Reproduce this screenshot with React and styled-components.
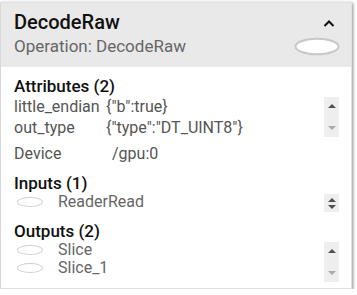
import styled, { createGlobalStyle } from "styled-components";

const GlobalStyle = createGlobalStyle`
    body {
        margin: 0;
        background: #fff;
        font-family: Roboto, "Noto Sans", sans-serif;
    }
`

const attributes = [
    { key: "little_endian", value: '{"b":true}' },
    { key: "out_type", value: '{"type":"DT_UINT8"}' },
];

const App = () => {
    return (
        <>
            <GlobalStyle />
            <Card>
                <Header>
                    <TitleWrap>
                        <Title>DecodeRaw</Title>
                        <Subtitle>Operation: DecodeRaw</Subtitle>
                    </TitleWrap>
                    <HeaderSide>
                        <Chevron width="12" height="8" viewBox="0 0 12 8">
                            <path d="M1.5 7 L6 2.5 L10.5 7" fill="none" stroke="#111" strokeWidth="2" />
                        </Chevron>
                        <Oval width="46" height="19" viewBox="0 0 46 19">
                            <ellipse cx="23" cy="9.5" rx="21.5" ry="7.8" fill="#fff" stroke="#c8c8c8" strokeWidth="2" />
                        </Oval>
                    </HeaderSide>
                </Header>
                <Body>
                    <SectionTitle>Attributes (2)</SectionTitle>
                    <ListRow>
                        <AttrTable>
                            {attributes.map((a) => (
                                <AttrRow key={a.key}>
                                    <AttrKey>{a.key}</AttrKey>
                                    <AttrValue>{a.value}</AttrValue>
                                </AttrRow>
                            ))}
                        </AttrTable>
                        <ScrollBar $height={40} $top={1}>
                            <Arrow $up />
                            <Arrow $disabled />
                        </ScrollBar>
                    </ListRow>
                    <DeviceRow>
                        <AttrKey>Device</AttrKey>
                        <DeviceValue>/gpu:0</DeviceValue>
                    </DeviceRow>
                    <SectionTitle $top={9}>Inputs (1)</SectionTitle>
                    <ListRow>
                        <NodeList>
                            <NodeRow><NodeOval /><NodeName>ReaderRead</NodeName></NodeRow>
                        </NodeList>
                        <ScrollBar $height={18} $top={1} $tight>
                            <Arrow $up />
                            <Arrow />
                        </ScrollBar>
                    </ListRow>
                    <SectionTitle $top={9}>Outputs (2)</SectionTitle>
                    <ListRow>
                        <NodeList>
                            <NodeRow><NodeOval /><NodeName>Slice</NodeName></NodeRow>
                            <NodeRow><NodeOval /><NodeName>Slice_1</NodeName></NodeRow>
                        </NodeList>
                        <ScrollBar $height={40} $top={1}>
                            <Arrow $up />
                            <Arrow $disabled />
                        </ScrollBar>
                    </ListRow>
                </Body>
            </Card>
        </>
    )
}

export default App

const Card = styled.div`
    margin-top: 2px;
    width: 352px;
    box-sizing: border-box;
    border: 1px solid #e0e0e0;
    border-left-color: #d8d8d8;
    background: #fff;
    box-shadow: 1px 1px 3px rgba(0, 0, 0, 0.45);
`
const Header = styled.div`
    background: #e9e9e9;
    height: 64px;
    box-sizing: border-box;
    padding: 7px 11px 0 13px;
    display: flex;
    justify-content: space-between;
`
const TitleWrap = styled.div`
    display: flex;
    flex-direction: column;
`
const Title = styled.div`
    font-size: 20px;
    font-weight: 500;
    line-height: 24px;
    color: #111;
`
const Subtitle = styled.div`
    font-size: 17px;
    line-height: 20px;
    margin-top: 2px;
    color: #666;
`
const HeaderSide = styled.div`
    display: flex;
    flex-direction: column;
    align-items: flex-end;
    padding-top: 9px;
    gap: 10px;
`
const Chevron = styled.svg`
    display: block;
    margin-right: 5px;
`
const Oval = styled.svg`
    display: block;
`
const Body = styled.div`
    padding: 9px 12px 6px 13px;
    display: flex;
    flex-direction: column;
`
const SectionTitle = styled.div`
    font-size: 17px;
    font-weight: 500;
    line-height: 20px;
    color: #111;
    margin-top: ${(p) => p.$top || 0}px;
`
const ListRow = styled.div`
    display: flex;
    justify-content: space-between;
    align-items: flex-start;
`
const AttrTable = styled.div`
    display: flex;
    flex-direction: column;
`
const AttrRow = styled.div`
    display: flex;
    font-size: 16px;
    line-height: 21px;
    color: #555;
`
const AttrKey = styled.div`
    width: 92px;
    color: #555;
`
const AttrValue = styled.div`
    color: #555;
`
const DeviceRow = styled.div`
    display: flex;
    font-size: 16px;
    line-height: 21px;
    margin-top: 5px;
    color: #555;
`
const DeviceValue = styled.div`
    padding-left: 6px;
`
const ScrollBar = styled.div`
    width: 15px;
    height: ${(p) => p.$height}px;
    margin-top: ${(p) => p.$top}px;
    background: #eee;
    display: flex;
    flex-direction: column;
    justify-content: ${(p) => (p.$tight ? "center" : "space-between")};
    align-items: center;
    padding: 7px 0;
    box-sizing: border-box;
    gap: 3px;
`
const Arrow = styled.div`
    width: 0;
    height: 0;
    border-left: 4px solid transparent;
    border-right: 4px solid transparent;
    ${(p) => (p.$up ? "border-bottom" : "border-top")}: 4px solid ${(p) => (p.$disabled ? "#aaa" : "#505050")};
`
const NodeList = styled.div`
    display: flex;
    flex-direction: column;
`
const NodeRow = styled.div`
    display: flex;
    align-items: center;
    font-size: 16px;
    line-height: 18px;
`
const NodeOval = styled.div`
    width: 24px;
    height: 8px;
    border: 1.5px solid #d0d0d0;
    border-radius: 50%;
    margin-left: 3px;
    margin-right: 15px;
`
const NodeName = styled.div`
    color: #666;
`
